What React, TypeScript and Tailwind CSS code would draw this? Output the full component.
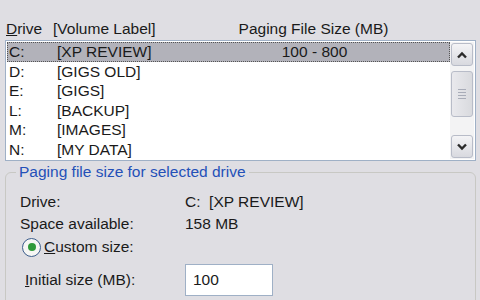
import React from "react";

const drives = [
  { letter: "C:", label: "[XP REVIEW]", size: "100 - 800", selected: true },
  { letter: "D:", label: "[GIGS OLD]", size: "" },
  { letter: "E:", label: "[GIGS]", size: "" },
  { letter: "L:", label: "[BACKUP]", size: "" },
  { letter: "M:", label: "[IMAGES]", size: "" },
  { letter: "N:", label: "[MY DATA]", size: "" },
];

function Chevron({ up }: { up?: boolean }) {
  return (
    <svg width="12" height="8" viewBox="0 0 12 8">
      <path
        d={up ? "M2 6.5 L6 2.5 L10 6.5" : "M2 1.5 L6 5.5 L10 1.5"}
        fill="none"
        stroke="#2a2a2a"
        strokeWidth="2.4"
      />
    </svg>
  );
}

function ScrollButton({ up }: { up?: boolean }) {
  return (
    <div className="h-[23px] w-[22px] rounded-[3px] border border-[#b8bcc8] bg-gradient-to-b from-[#f4f4f6] to-[#d8d9df] flex items-center justify-center">
      <Chevron up={up} />
    </div>
  );
}

export default function App() {
  return (
    <div
      className="w-[480px] h-[300px] overflow-hidden bg-[#dfdee3] text-[15.5px] text-[#1a1a1a] pl-[5px] pr-[4px]"
      style={{ fontFamily: '"Liberation Sans", Tahoma, sans-serif' }}
    >
      {/* column headers */}
      <div className="flex h-[40px] items-end pb-[4px] leading-none">
        <span className="w-[48px] pl-[1px]">
          <span className="underline">D</span>rive
        </span>
        <span className="w-[183px]">[Volume Label]</span>
        <span className="w-[155px] text-center">Paging File Size (MB)</span>
      </div>

      {/* drive list */}
      <div className="flex h-[121px] border border-[#9fb0c6] bg-white p-[1px]">
        <div className="flex-1 flex flex-col">
          {drives.map((d) => (
            <div
              key={d.letter}
              className={`flex h-[19.5px] items-center leading-none ${
                d.selected ? "bg-[#b2b2ba] outline-1 outline-dotted outline-[#555] -outline-offset-1" : ""
              }`}
            >
              <span className="w-[50px] pl-[2px]">{d.letter}</span>
              <span className="w-[180px]">{d.label}</span>
              <span className="w-[155px] text-center">{d.size}</span>
            </div>
          ))}
        </div>
        <div className="w-[24px] flex flex-col items-center bg-[#f3f3f4] pt-[1px] pb-[1px]">
          <ScrollButton up />
          <div className="mt-[5px] h-[46px] w-[22px] rounded-[3px] border border-[#b8bcc8] bg-gradient-to-r from-[#e9e9ed] to-[#d9dade] flex flex-col items-center justify-center gap-[2px]">
            <div className="h-px w-[8px] bg-[#a8acb8]" />
            <div className="h-px w-[8px] bg-[#a8acb8]" />
            <div className="h-px w-[8px] bg-[#a8acb8]" />
            <div className="h-px w-[8px] bg-[#a8acb8]" />
          </div>
          <div className="flex-1" />
          <ScrollButton />
        </div>
      </div>

      {/* group box */}
      <div className="relative mt-[11px] h-[140px] rounded-[6px] border border-[#c8c8c4] pl-[14px] pt-[18px]">
        <span className="absolute -top-[11px] left-[10px] bg-[#dfdee3] px-[3px] text-[#2450b8] leading-[20px]">
          Paging file size for selected drive
        </span>
        <div className="flex h-[22px] items-center">
          <span className="w-[165px]">Drive:</span>
          <span>C:&nbsp;&nbsp;[XP REVIEW]</span>
        </div>
        <div className="flex h-[22px] items-center">
          <span className="w-[165px]">Space available:</span>
          <span>158 MB</span>
        </div>
        <div className="flex h-[24px] items-center pl-[2px]">
          <span className="flex h-[19px] w-[19px] items-center justify-center rounded-full border border-[#3c5d8c] bg-[#f6f6f4]">
            <span className="h-[8px] w-[8px] rounded-full bg-[#2f9a3a]" />
          </span>
          <span className="ml-[3px]">
            <span className="underline">C</span>ustom size:
          </span>
        </div>
        <div className="mt-[5px] flex items-center pl-[5px]">
          <span className="w-[160px]">
            <span className="underline">I</span>nitial size (MB):
          </span>
          <div className="h-[32px] w-[88px] border border-[#9fb0c6] bg-white flex items-center pl-[7px]">
            100
          </div>
        </div>
      </div>
    </div>
  );
}
